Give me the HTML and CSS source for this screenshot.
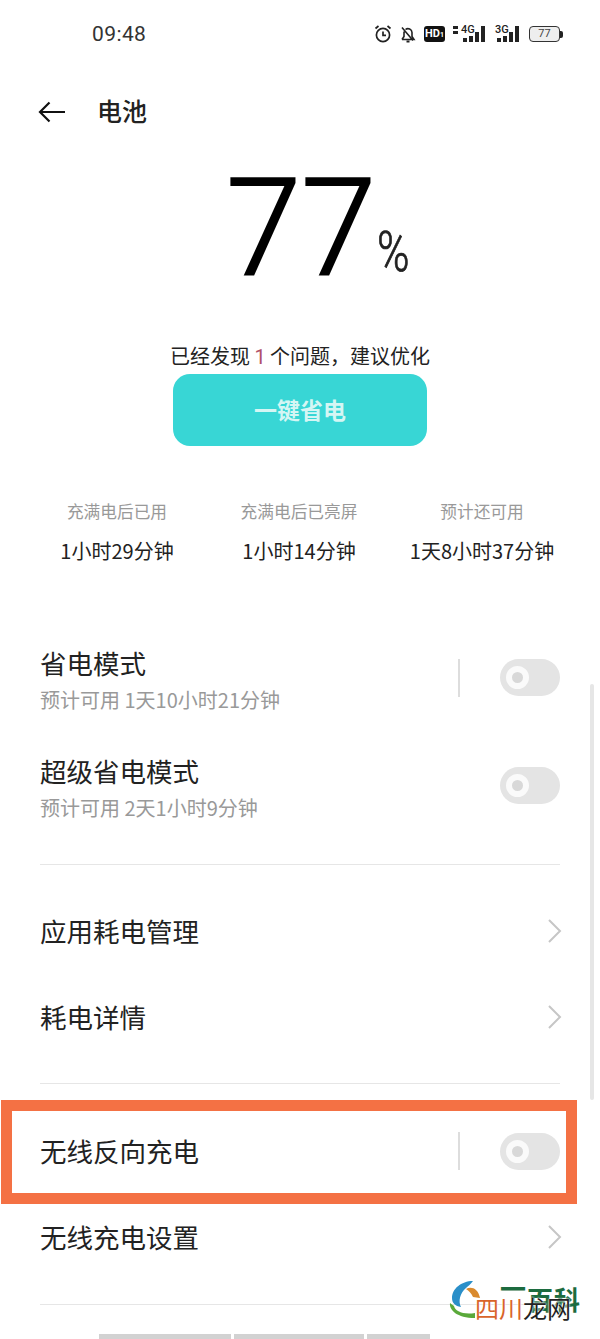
FILE: index.html
```html
<!DOCTYPE html>
<html lang="zh-CN">
<head>
  <meta charset="UTF-8" />
  <title>电池</title>
  <link rel="stylesheet" href="styles.css">
</head>
<body>
  <div class="page">
    <!-- status bar -->
    <div class="statusbar">
      <span class="time">09:48</span>
      <div class="status-icons">
        <svg class="ic-alarm" width="18" height="20" viewBox="0 0 18 20" fill="none" stroke="#222" stroke-width="1.7">
          <circle cx="9" cy="11" r="6.6"/>
          <path d="M9 7.500v3.800h3M1.500 4.500l3-2.500M16.500 4.500l-3-2.500"/>
        </svg>
        <svg class="ic-bell" width="16" height="20" viewBox="0 0 16 20" fill="none" stroke="#222" stroke-width="1.6">
          <path d="M2 15.500h12l-2-3V8.500a4 4 0 0 0-6.500-3M4 7.500v5l-2 3M2 3.500l11 13"/>
          <path d="M6.500 17.500h3" stroke-width="2"/>
        </svg>
        <span class="hd">HD<small>1</small></span>
        <div class="signal sig-4g">
          <span class="arrows"></span>
          <span class="net">4G</span>
          <span class="bars"><b class="b1"></b><b class="b2"></b><b class="b3"></b><b class="b4"></b></span>
        </div>
        <div class="signal sig-3g">
          <span class="net">3G</span>
          <span class="bars"><b class="b1"></b><b class="b2"></b><b class="b3"></b><b class="b4"></b></span>
        </div>
        <div class="battery"><span class="battery-body">77</span><span class="battery-tip"></span></div>
      </div>
    </div>

    <!-- title -->
    <div class="titlebar">
      <svg class="back" width="30" height="24" viewBox="0 0 30 24" fill="none" stroke="#111" stroke-width="2.200">
        <path d="M28 12H3M12.500 2.500L3 12l9.500 9.500"/>
      </svg>
      <h1>电池</h1>
    </div>

    <div class="level"><span class="num">77</span><span class="pct">%</span></div>

    <p class="notice">已经发现 <em>1</em> 个问题，建议优化</p>
    <div class="btn-wrap"><button class="save-btn">一键省电</button></div>

    <div class="stats">
      <div class="stat"><div class="stat-label">充满电后已用</div><div class="stat-value">1小时29分钟</div></div>
      <div class="stat"><div class="stat-label">充满电后已亮屏</div><div class="stat-value">1小时14分钟</div></div>
      <div class="stat"><div class="stat-label">预计还可用</div><div class="stat-value">1天8小时37分钟</div></div>
    </div>

    <div class="row row-two first">
      <div class="row-text"><div class="row-title">省电模式</div><div class="row-sub">预计可用 1天10小时21分钟</div></div>
      <span class="vline"></span>
      <span class="toggle"></span>
    </div>
    <div class="row row-two">
      <div class="row-text"><div class="row-title">超级省电模式</div><div class="row-sub">预计可用 2天1小时9分钟</div></div>
      <span class="toggle"></span>
    </div>
    <div class="divider div-a"></div>

    <div class="row row-link">
      <div class="row-title">应用耗电管理</div>
      <svg class="chev" width="16" height="26" viewBox="0 0 16 26" fill="none" stroke="#c6c6c6" stroke-width="2"><path d="M2 2l11 11L2 24"/></svg>
    </div>
    <div class="row row-link">
      <div class="row-title">耗电详情</div>
      <svg class="chev" width="16" height="26" viewBox="0 0 16 26" fill="none" stroke="#c6c6c6" stroke-width="2"><path d="M2 2l11 11L2 24"/></svg>
    </div>
    <div class="divider div-b"></div>

    <div class="row row-marked">
      <div class="row-title">无线反向充电</div>
      <span class="vline"></span>
      <span class="toggle"></span>
    </div>
    <div class="row row-link last">
      <div class="row-title">无线充电设置</div>
      <svg class="chev" width="16" height="26" viewBox="0 0 16 26" fill="none" stroke="#c6c6c6" stroke-width="2"><path d="M2 2l11 11L2 24"/></svg>
    </div>
    <div class="divider div-c"></div>

    <div class="bottom-tabs"><span class="t1"></span><span class="t2"></span><span class="t3"></span></div>

    <div class="scrollbar"></div>

    <!-- watermark -->
    <div class="watermark">
      <svg class="wm-logo" width="32" height="40" viewBox="0 0 32 40">
        <path d="M24 1C12 1 3 9 3 18c0 5 3 8 9 9-3-6-1-14 5-19 2-2 5-4 7-7z" fill="#2a8fc9"/>
        <path d="M17 9c5-3 12-1 14 9l-7-1c-2-4-4-6-7-8z" fill="#d98a2e"/>
        <path d="M1 23c-1 7 7 15 25 15v-5C14 35 6 31 5 26c-1-1-3-2-4-3z" fill="#5aa93a"/>
      </svg>
      <span class="wm-back"><span class="wm-yi">一</span>百科</span>
      <span class="wm-front"><span class="wm-orange">四川</span>龙网</span>
    </div>
  </div>
</body>
</html>
```

FILE: styles.css
```css
* { box-sizing: border-box; }
html, body { margin: 0; padding: 0; background: #fff; }
body { font-family: "Noto Sans CJK SC", "Noto Sans", sans-serif; color: #222; }

.page { position: relative; width: 600px; height: 1339px; overflow: hidden; }

.statusbar { display: flex; align-items: center; justify-content: space-between; height: 68px; padding: 0 37px 0 92px; }
.time { font-family: Roboto, sans-serif; font-size: 21px; color: #333; letter-spacing: 0.4px; }
.status-icons { display: flex; align-items: center; gap: 8px; }
.hd { display: block; width: 21px; height: 16px; background: #111; border-radius: 3px; color: #fff; font: bold 11px/16px Roboto, sans-serif; text-align: center; }
.hd small { font-size: 7px; }
.signal { position: relative; height: 16px; }
.sig-4g { width: 32px; }
.sig-3g { width: 24px; margin-left: 2px; }
.arrows { position: absolute; left: 0; top: 0; width: 5px; height: 8px; border-top: 3px solid #222; border-bottom: 3px solid #222; }
.net { position: absolute; top: -1px; font: 500 11px/10px Roboto, sans-serif; color: #222; white-space: nowrap; }
.sig-4g .net { left: 8px; }
.sig-3g .net { left: 0; }
.bars { position: absolute; right: 0; bottom: 0; display: flex; align-items: flex-end; gap: 2px; }
.bars b { display: block; width: 4px; background: #222; }
.bars .b1 { height: 4px; }
.bars .b2 { height: 6px; }
.bars .b3 { height: 10px; }
.bars .b4 { height: 16px; }
.battery { display: flex; align-items: center; margin-left: 2px; }
.battery-body { width: 31px; height: 16px; border: 1.500px solid #333; border-radius: 4px; background: #eee; font: 11px/13px Roboto, sans-serif; color: #444; text-align: center; }
.battery-tip { width: 3px; height: 7px; background: #222; border-radius: 0 2px 2px 0; }

.titlebar { display: flex; align-items: center; height: 88px; padding-left: 37px; }
.back { margin-right: 30px; }
h1 { margin: 0 0 4px; font-size: 25px; font-weight: 500; color: #222; line-height: 1; }

.level { display: flex; align-items: flex-end; justify-content: center; height: 144px; padding-left: 36px; }
.num { font-family: Roboto, sans-serif; font-weight: 300; font-size: 135px; line-height: 144px; color: #000; margin-bottom: -1px; -webkit-text-stroke: 2px #000; }
.pct { font-family: Roboto, sans-serif; font-weight: 300; font-size: 44px; line-height: 54px; margin: 0 0 14px 1px; color: #222; transform: scaleY(1.25); transform-origin: bottom; -webkit-text-stroke: 0.6px #222; }

.notice { margin: 0; height: 60px; padding-top: 44px; font-size: 20px; line-height: 24px; text-align: center; color: #222; }
.notice em { font-style: normal; color: #b0506a; font-family: Roboto, sans-serif; }
.btn-wrap { display: flex; justify-content: center; height: 72px; margin-top: 14px; }
.save-btn { width: 254px; height: 72px; padding: 0 0 3px; border: 0; border-radius: 17px; background: #38d6d5; color: #d5f6f4; font: 700 23px "Noto Sans CJK SC", sans-serif; }

.stats { display: grid; grid-template-columns: 174px 190px 176px; margin-top: 53px; padding-left: 30px; text-align: center; }
.stat-label { font-size: 16.700px; line-height: 24px; color: #999; }
.stat-value { font-size: 20px; line-height: 24px; margin-top: 16px; color: #222; }

.row { display: flex; align-items: center; padding: 0 40px; }
.row-text { flex: 1; }
.row-title { font-size: 26.500px; line-height: 34px; color: #222; }
.row-sub { font-size: 20px; line-height: 28px; margin-top: 6px; color: #999; }
.row-two { height: 108px; }
.row-two.first { margin-top: 63px; }
.row-two .toggle, .row-two .vline { margin-bottom: 5px; }
.row-link { height: 86px; justify-content: space-between; }
.row-link .chev { margin-right: -3px; }
.vline { width: 2px; height: 38px; margin-left: auto; margin-right: 40px; background: #ddd; }
.toggle { position: relative; display: block; width: 60px; height: 37px; border-radius: 19px; background: #e4e4e4; }
.toggle::after { content: ""; position: absolute; left: 6px; top: 7px; width: 11px; height: 11px; box-sizing: content-box; border-radius: 50%; background: #d8d8d8; border: 6px solid #fafafa; }

.divider { height: 1px; margin: 0 40px; background: #e6e6e6; }
.div-a { margin-top: 22px; margin-bottom: 23px; }
.div-b { margin-top: 23px; margin-bottom: 16px; }
.div-c { margin-top: 34px; }

.row-marked { width: 576px; height: 104px; margin-left: 1px; padding: 0 6px 2px 28px; border: 11px solid #f47144; }
.last { height: 66px; }

.bottom-tabs { position: absolute; left: 99px; top: 1334px; display: flex; gap: 3px; }
.bottom-tabs span { display: block; height: 5px; background: #d2d2d2; }
.t1 { width: 132px; }
.t2 { width: 130px; }
.t3 { width: 63px; }

.scrollbar { position: absolute; left: 590px; top: 684px; width: 4px; height: 416px; background: #e6e6e6; border-radius: 2px; }

.watermark { position: absolute; left: 448px; top: 1278px; width: 134px; height: 52px; }
.wm-logo { position: absolute; left: 1px; top: 2px; }
.wm-back { position: absolute; left: 52px; top: 6px; font-size: 26px; line-height: 30px; font-weight: 700; color: #1c6b3f; letter-spacing: 1px; white-space: nowrap; }
.wm-yi { position: relative; top: -11px; }
.wm-front { position: absolute; left: 27px; top: 16px; font-size: 24px; line-height: 28px; color: #222; white-space: nowrap; text-shadow: 0 0 2px #fff, 0 0 2px #fff; }
.wm-orange { color: #d9642a; }
```
